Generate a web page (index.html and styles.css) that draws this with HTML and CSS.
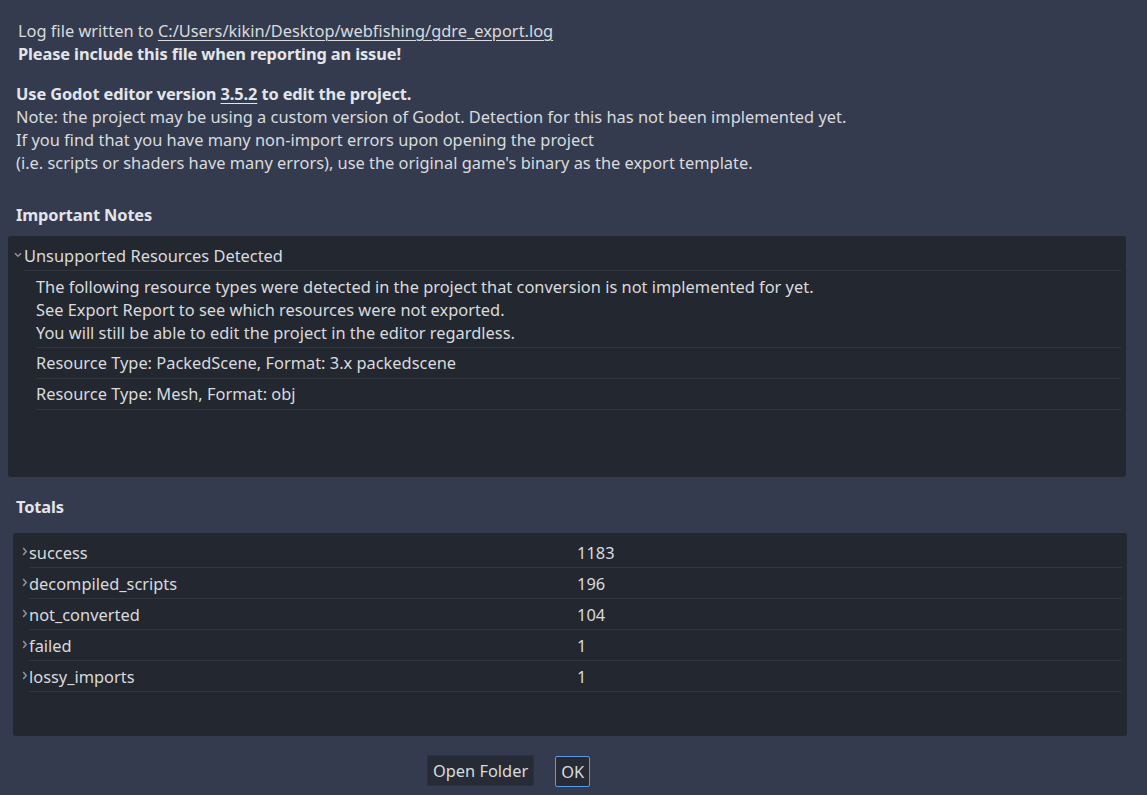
FILE: index.html
```html
<!DOCTYPE html>
<html>
<head>
<meta charset="utf-8">
<link rel="stylesheet" href="styles.css">
</head>
<body>
<div class="dialog">
  <div class="log">
    <div class="line">Log file written to <span class="link">C:/Users/kikin/Desktop/webfishing/gdre_export.log</span></div>
    <div class="line bold">Please include this file when reporting an issue!</div>
  </div>
  <div class="info">
    <div class="line bold">Use Godot editor version <span class="link">3.5.2</span> to edit the project.</div>
    <div class="line">Note: the project may be using a custom version of Godot. Detection for this has not been implemented yet.</div>
    <div class="line">If you find that you have many non-import errors upon opening the project</div>
    <div class="line">(i.e. scripts or shaders have many errors), use the original game's binary as the export template.</div>
  </div>

  <div class="heading notes-heading">Important Notes</div>
  <div class="panel notes">
    <div class="row">
      <span class="arrow"><svg width="8" height="6" viewBox="0 0 8 6"><path d="M1 1.2 L4 4.2 L7 1.2" fill="none" stroke="#8d9098" stroke-width="1.6"/></svg></span>
      <div class="cell">Unsupported Resources Detected</div>
    </div>
    <div class="child multi">
      <div class="line">The following resource types were detected in the project that conversion is not implemented for yet.</div>
      <div class="line">See Export Report to see which resources were not exported.</div>
      <div class="line">You will still be able to edit the project in the editor regardless.</div>
    </div>
    <div class="child">Resource Type: PackedScene, Format: 3.x packedscene</div>
    <div class="child">Resource Type: Mesh, Format: obj</div>
  </div>

  <div class="heading totals-heading">Totals</div>
  <div class="panel totals">
    <div class="row">
      <span class="arrow"><svg width="6" height="9" viewBox="0 0 6 9"><path d="M1.2 1 L4.2 4.5 L1.2 8" fill="none" stroke="#8d9098" stroke-width="1.6"/></svg></span>
      <div class="cell"><span class="name">success</span><span class="value">1183</span></div>
    </div>
    <div class="row">
      <span class="arrow"><svg width="6" height="9" viewBox="0 0 6 9"><path d="M1.2 1 L4.2 4.5 L1.2 8" fill="none" stroke="#8d9098" stroke-width="1.6"/></svg></span>
      <div class="cell"><span class="name">decompiled_scripts</span><span class="value">196</span></div>
    </div>
    <div class="row">
      <span class="arrow"><svg width="6" height="9" viewBox="0 0 6 9"><path d="M1.2 1 L4.2 4.5 L1.2 8" fill="none" stroke="#8d9098" stroke-width="1.6"/></svg></span>
      <div class="cell"><span class="name">not_converted</span><span class="value">104</span></div>
    </div>
    <div class="row">
      <span class="arrow"><svg width="6" height="9" viewBox="0 0 6 9"><path d="M1.2 1 L4.2 4.5 L1.2 8" fill="none" stroke="#8d9098" stroke-width="1.6"/></svg></span>
      <div class="cell"><span class="name">failed</span><span class="value">1</span></div>
    </div>
    <div class="row">
      <span class="arrow"><svg width="6" height="9" viewBox="0 0 6 9"><path d="M1.2 1 L4.2 4.5 L1.2 8" fill="none" stroke="#8d9098" stroke-width="1.6"/></svg></span>
      <div class="cell"><span class="name">lossy_imports</span><span class="value">1</span></div>
    </div>
  </div>

  <div class="buttons">
    <button class="btn">Open Folder</button>
    <button class="btn ok">OK</button>
  </div>
</div>
</body>
</html>
```

FILE: styles.css
```css
html, body {
  margin: 0;
  padding: 0;
  background: #343b4f;
  height: 100%;
  overflow: hidden;
}
body {
  font-family: "Noto Sans", "Open Sans", sans-serif;
  font-size: 16.4px;
  color: #d9dbde;
}
.dialog {
  display: flex;
  flex-direction: column;
}
.line {
  line-height: 23px;
  white-space: nowrap;
}
.bold {
  font-weight: 700;
  letter-spacing: -0.12px;
  color: #e4e5e8;
}
.link {
  text-decoration: underline;
  text-underline-offset: 3px;
  text-decoration-thickness: 1px;
}
.log {
  padding: 19px 0 0 18px;
}
.info {
  padding: 17px 0 0 16px;
}
.heading {
  font-weight: 700;
  letter-spacing: -0.12px;
  line-height: 23px;
  color: #e4e5e8;
  padding-left: 16px;
}
.notes-heading {
  margin-top: 29px;
}
.totals-heading {
  margin-top: 18px;
}
.panel {
  background: #23272f;
  border-radius: 3px;
  box-sizing: border-box;
}
.notes {
  margin: 10px 0 0 8px;
  width: 1118px;
  height: 241px;
  padding: 5px 5px 0 5px;
}
.totals {
  margin: 15px 0 0 13px;
  width: 1114px;
  height: 203px;
  padding: 4px 5px 0 5px;
}
.row {
  display: flex;
  align-items: stretch;
}
.arrow {
  width: 11px;
  display: flex;
  align-items: center;
  justify-content: center;
  flex-shrink: 0;
  box-sizing: border-box;
}
.notes .arrow {
  padding: 0 1px 2px 0;
}
.totals .arrow {
  padding: 0 0 3px 3px;
}
.cell {
  flex: 1;
  display: flex;
  align-items: center;
  height: 29px;
  border-bottom: 1px solid #2f343d;
  white-space: nowrap;
}
.totals .cell {
  height: 30px;
}
.child {
  margin-left: 23px;
  height: 30px;
  line-height: 30px;
  border-bottom: 1px solid #2f343d;
  white-space: nowrap;
}
.child.multi {
  height: auto;
  padding: 4px 0 3px;
}
.name {
  width: 548px;
  flex-shrink: 0;
}
.buttons {
  display: flex;
  justify-content: center;
  gap: 21px;
  margin-top: 19px;
  padding-right: 130px;
  align-items: flex-start;
}
.btn {
  font-family: "Noto Sans", "Open Sans", sans-serif;
  font-size: 16.4px;
  color: #d9dbde;
  background: #262b36;
  border: 1px solid #2b303c;
  border-radius: 2px;
  height: 31px;
  padding: 0 5px;
  line-height: 29px;
}
.ok {
  border: 1px solid #5b9be6;
  margin-top: 1px;
  padding: 0 5px;
}
```
